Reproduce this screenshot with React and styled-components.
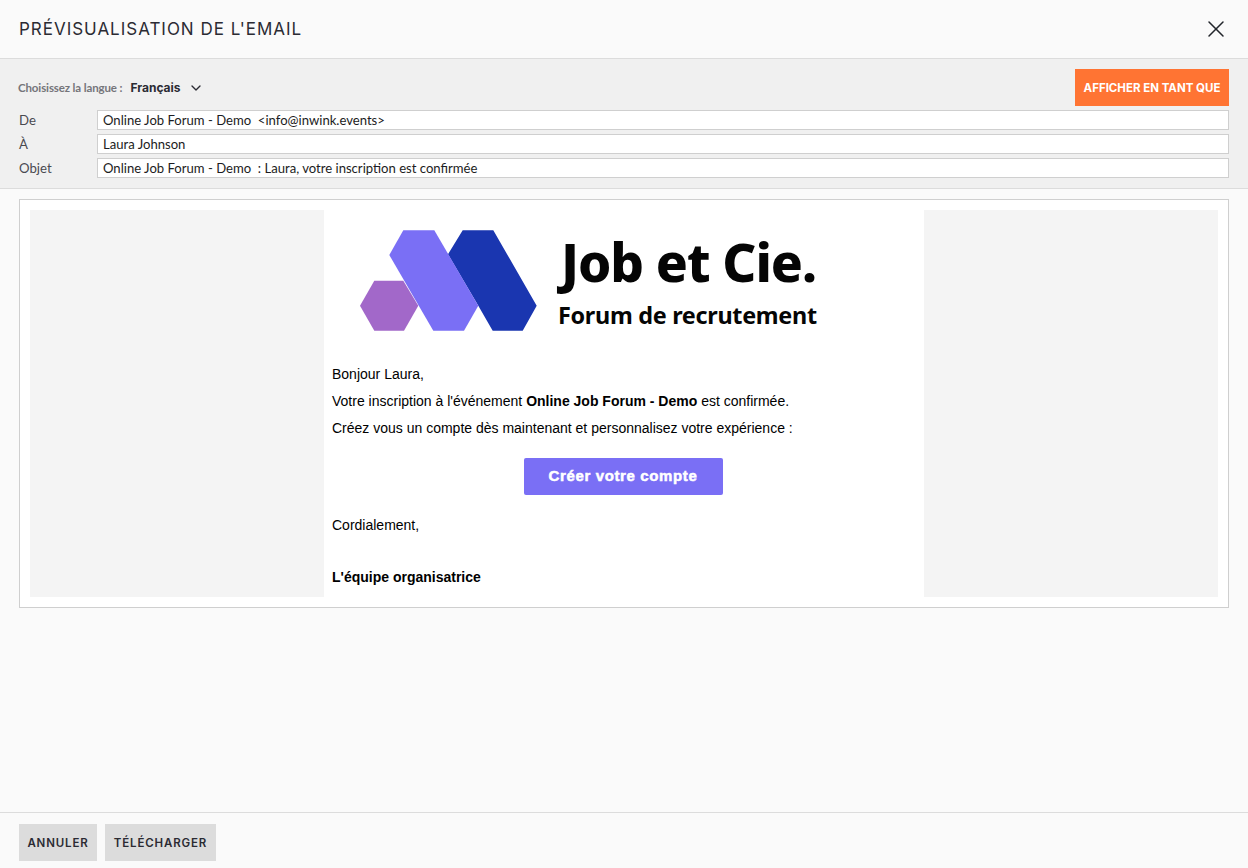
import React from "react";
import styled, { createGlobalStyle } from "styled-components";
import { X, ChevronDown } from "lucide-react";

const Global = createGlobalStyle`
  html, body { margin: 0; padding: 0; background: #fafafa; }
  * { box-sizing: border-box; }
`;

const Page = styled.div`
  width: 1248px;
  height: 868px;
  display: flex;
  flex-direction: column;
  background: #fafafa;
  font-family: Lato, sans-serif;
  color: #2b2b33;
  overflow: hidden;
`;

const Header = styled.header`
  height: 59px;
  flex: none;
  display: flex;
  align-items: center;
  justify-content: space-between;
  padding: 0 18px 0 19px;
  border-bottom: 1px solid #dcdcdc;
`;

const Title = styled.h1`
  margin: 0;
  font-family: Inter, sans-serif;
  font-size: 17px;
  font-weight: 400;
  letter-spacing: 0.98px;
  color: #2b2b33;
`;

const Close = styled.button`
  display: flex;
  padding: 0;
  border: 0;
  background: none;
  color: #22252b;
`;

const Meta = styled.section`
  height: 130px;
  flex: none;
  background: #f0f0f0;
  border-bottom: 1px solid #dcdcdc;
  padding: 10px 19px 0;
`;

const LangRow = styled.div`
  height: 37px;
  display: flex;
  align-items: center;
  justify-content: space-between;
  margin-bottom: 4px;
`;

const Lang = styled.div`
  display: flex;
  align-items: center;
`;

const LangLabel = styled.span`
  font-size: 11.5px;
  font-weight: 700;
  color: #75757a;
  letter-spacing: -0.12px;
  margin-left: -1px;
`;

const LangValue = styled.span`
  font-family: Inter, sans-serif;
  font-size: 12px;
  font-weight: 700;
  color: #2b2b33;
  margin: 0 7px 0 8px;
`;

const ViewAs = styled.button`
  width: 154px;
  height: 37px;
  border: 0;
  padding: 0;
  background: #ff7433;
  color: #fff;
  font-family: Inter, sans-serif;
  font-size: 11.5px;
  font-weight: 700;
`;

const Field = styled.div`
  display: flex;
  height: 20px;
  margin-bottom: 4px;
  align-items: center;
`;

const FieldLabel = styled.span`
  width: 78px;
  flex: none;
  font-size: 13.2px;
  line-height: 18px;
  color: #4a4a50;
`;

const FieldValue = styled.div`
  flex: 1;
  height: 20px;
  line-height: 18px;
  background: #fff;
  border: 1px solid #cfcfcf;
  padding-left: 5px;
  font-size: 13.1px;
  color: #1c1c22;
  white-space: pre;
`;

const Body = styled.main`
  flex: 1;
  padding: 10px 19px 0;
`;

const Frame = styled.div`
  height: 409px;
  border: 1px solid #cfcfcf;
  background: #fff;
  padding: 10px;
`;

const EmailBg = styled.div`
  height: 387px;
  background: #f4f4f4;
  display: flex;
  justify-content: center;
`;

const Email = styled.article`
  width: 600px;
  background: #fff;
  padding: 0 8px;
  font-family: "Liberation Sans", Arial, sans-serif;
  font-size: 14px;
  color: #000;
`;

const Logo = styled.div`
  height: 156px;
  display: flex;
  align-items: flex-start;
`;

const LogoMark = styled.svg`
  flex: none;
  margin-left: -8px;
`;

const LogoText = styled.div`
  display: flex;
  flex-direction: column;
  margin-left: 8px;
  font-family: "Noto Sans", sans-serif;
  font-weight: 800;
  color: #050505;
`;

const LogoName = styled.span`
  font-size: 53px;
  line-height: 60px;
  margin: 22px 0 0 3px;
  letter-spacing: -1.05px;
  white-space: nowrap;
`;

const LogoTagline = styled.span`
  font-size: 23.4px;
  line-height: 30px;
  margin-top: 8px;
  font-weight: 700;
  letter-spacing: -0.3px;
  white-space: nowrap;
`;

const Para = styled.p`
  margin: 0 0 11px;
  line-height: 16px;
`;

const Spacer = styled.div`
  height: 25px;
`;

const CtaRow = styled.div`
  display: flex;
  justify-content: center;
  margin: 22px 0 22px;
  padding-right: 2px;
`;

const Cta = styled.a`
  width: 199px;
  height: 37px;
  padding-bottom: 2px;
  display: flex;
  align-items: center;
  justify-content: center;
  background: #7a6ff5;
  border-radius: 2px;
  color: #fff;
  font-size: 15px;
  font-weight: 700;
  letter-spacing: 0.63px;
  -webkit-text-stroke: 0.5px #fff;
`;

const Footer = styled.footer`
  height: 56px;
  flex: none;
  border-top: 1px solid #dcdcdc;
  padding: 11px 19px 0;
  display: flex;
  gap: 8px;
  align-items: flex-start;
`;

const FootButton = styled.button`
  height: 37px;
  width: ${(p) => p.$w}px;
  padding: 0;
  border: 0;
  background: #dcdcdc;
  color: #2b2b33;
  font-family: Inter, sans-serif;
  font-size: 11.5px;
  font-weight: 600;
  letter-spacing: 0.85px;
`;

export default function App() {
  return (
    <Page>
      <Global />
      <Header>
        <Title>PRÉVISUALISATION DE L'EMAIL</Title>
        <Close aria-label="Fermer">
          <X size={28} strokeWidth={1.5} absoluteStrokeWidth />
        </Close>
      </Header>
      <Meta>
        <LangRow>
          <Lang>
            <LangLabel>Choisissez la langue :</LangLabel>
            <LangValue>Français</LangValue>
            <ChevronDown size={16} strokeWidth={2} />
          </Lang>
          <ViewAs>AFFICHER EN TANT QUE</ViewAs>
        </LangRow>
        <Field>
          <FieldLabel>De</FieldLabel>
          <FieldValue>Online Job Forum - Demo  {"<info@inwink.events>"}</FieldValue>
        </Field>
        <Field>
          <FieldLabel>À</FieldLabel>
          <FieldValue>Laura Johnson</FieldValue>
        </Field>
        <Field>
          <FieldLabel>Objet</FieldLabel>
          <FieldValue>Online Job Forum - Demo  : Laura, votre inscription est confirmée</FieldValue>
        </Field>
      </Meta>
      <Body>
        <Frame>
          <EmailBg>
            <Email>
              <Logo>
                <LogoMark width="226" height="150" viewBox="324 210 226 150">
                  <polygon fill="#a268c9" points="360,305.7 374.3,280.7 403.3,280.7 418.3,305.7 404,330.7 374.3,330.7" />
                  <polygon fill="#1a36b0" points="462.7,230.3 493.3,230.3 536.7,305.7 522.7,330.7 492.7,330.7 478.3,305.7 448,254.3" />
                  <polygon fill="#7a6ff5" points="403.3,230.3 434.3,230.3 478.3,305.7 464,330.7 433.3,330.7 389.3,255" />
                </LogoMark>
                <LogoText>
                  <LogoName>Job et Cie.</LogoName>
                  <LogoTagline>Forum de recrutement</LogoTagline>
                </LogoText>
              </Logo>
              <Para>Bonjour Laura,</Para>
              <Para>
                Votre inscription à l'événement <b>Online Job Forum - Demo</b> est confirmée.
              </Para>
              <Para>Créez vous un compte dès maintenant et personnalisez votre expérience :</Para>
              <CtaRow>
                <Cta>Créer votre compte</Cta>
              </CtaRow>
              <Para>Cordialement,</Para>
              <Spacer />
              <Para>
                <b>L'équipe organisatrice</b>
              </Para>
            </Email>
          </EmailBg>
        </Frame>
      </Body>
      <Footer>
        <FootButton $w={78}>ANNULER</FootButton>
        <FootButton $w={111}>TÉLÉCHARGER</FootButton>
      </Footer>
    </Page>
  );
}
